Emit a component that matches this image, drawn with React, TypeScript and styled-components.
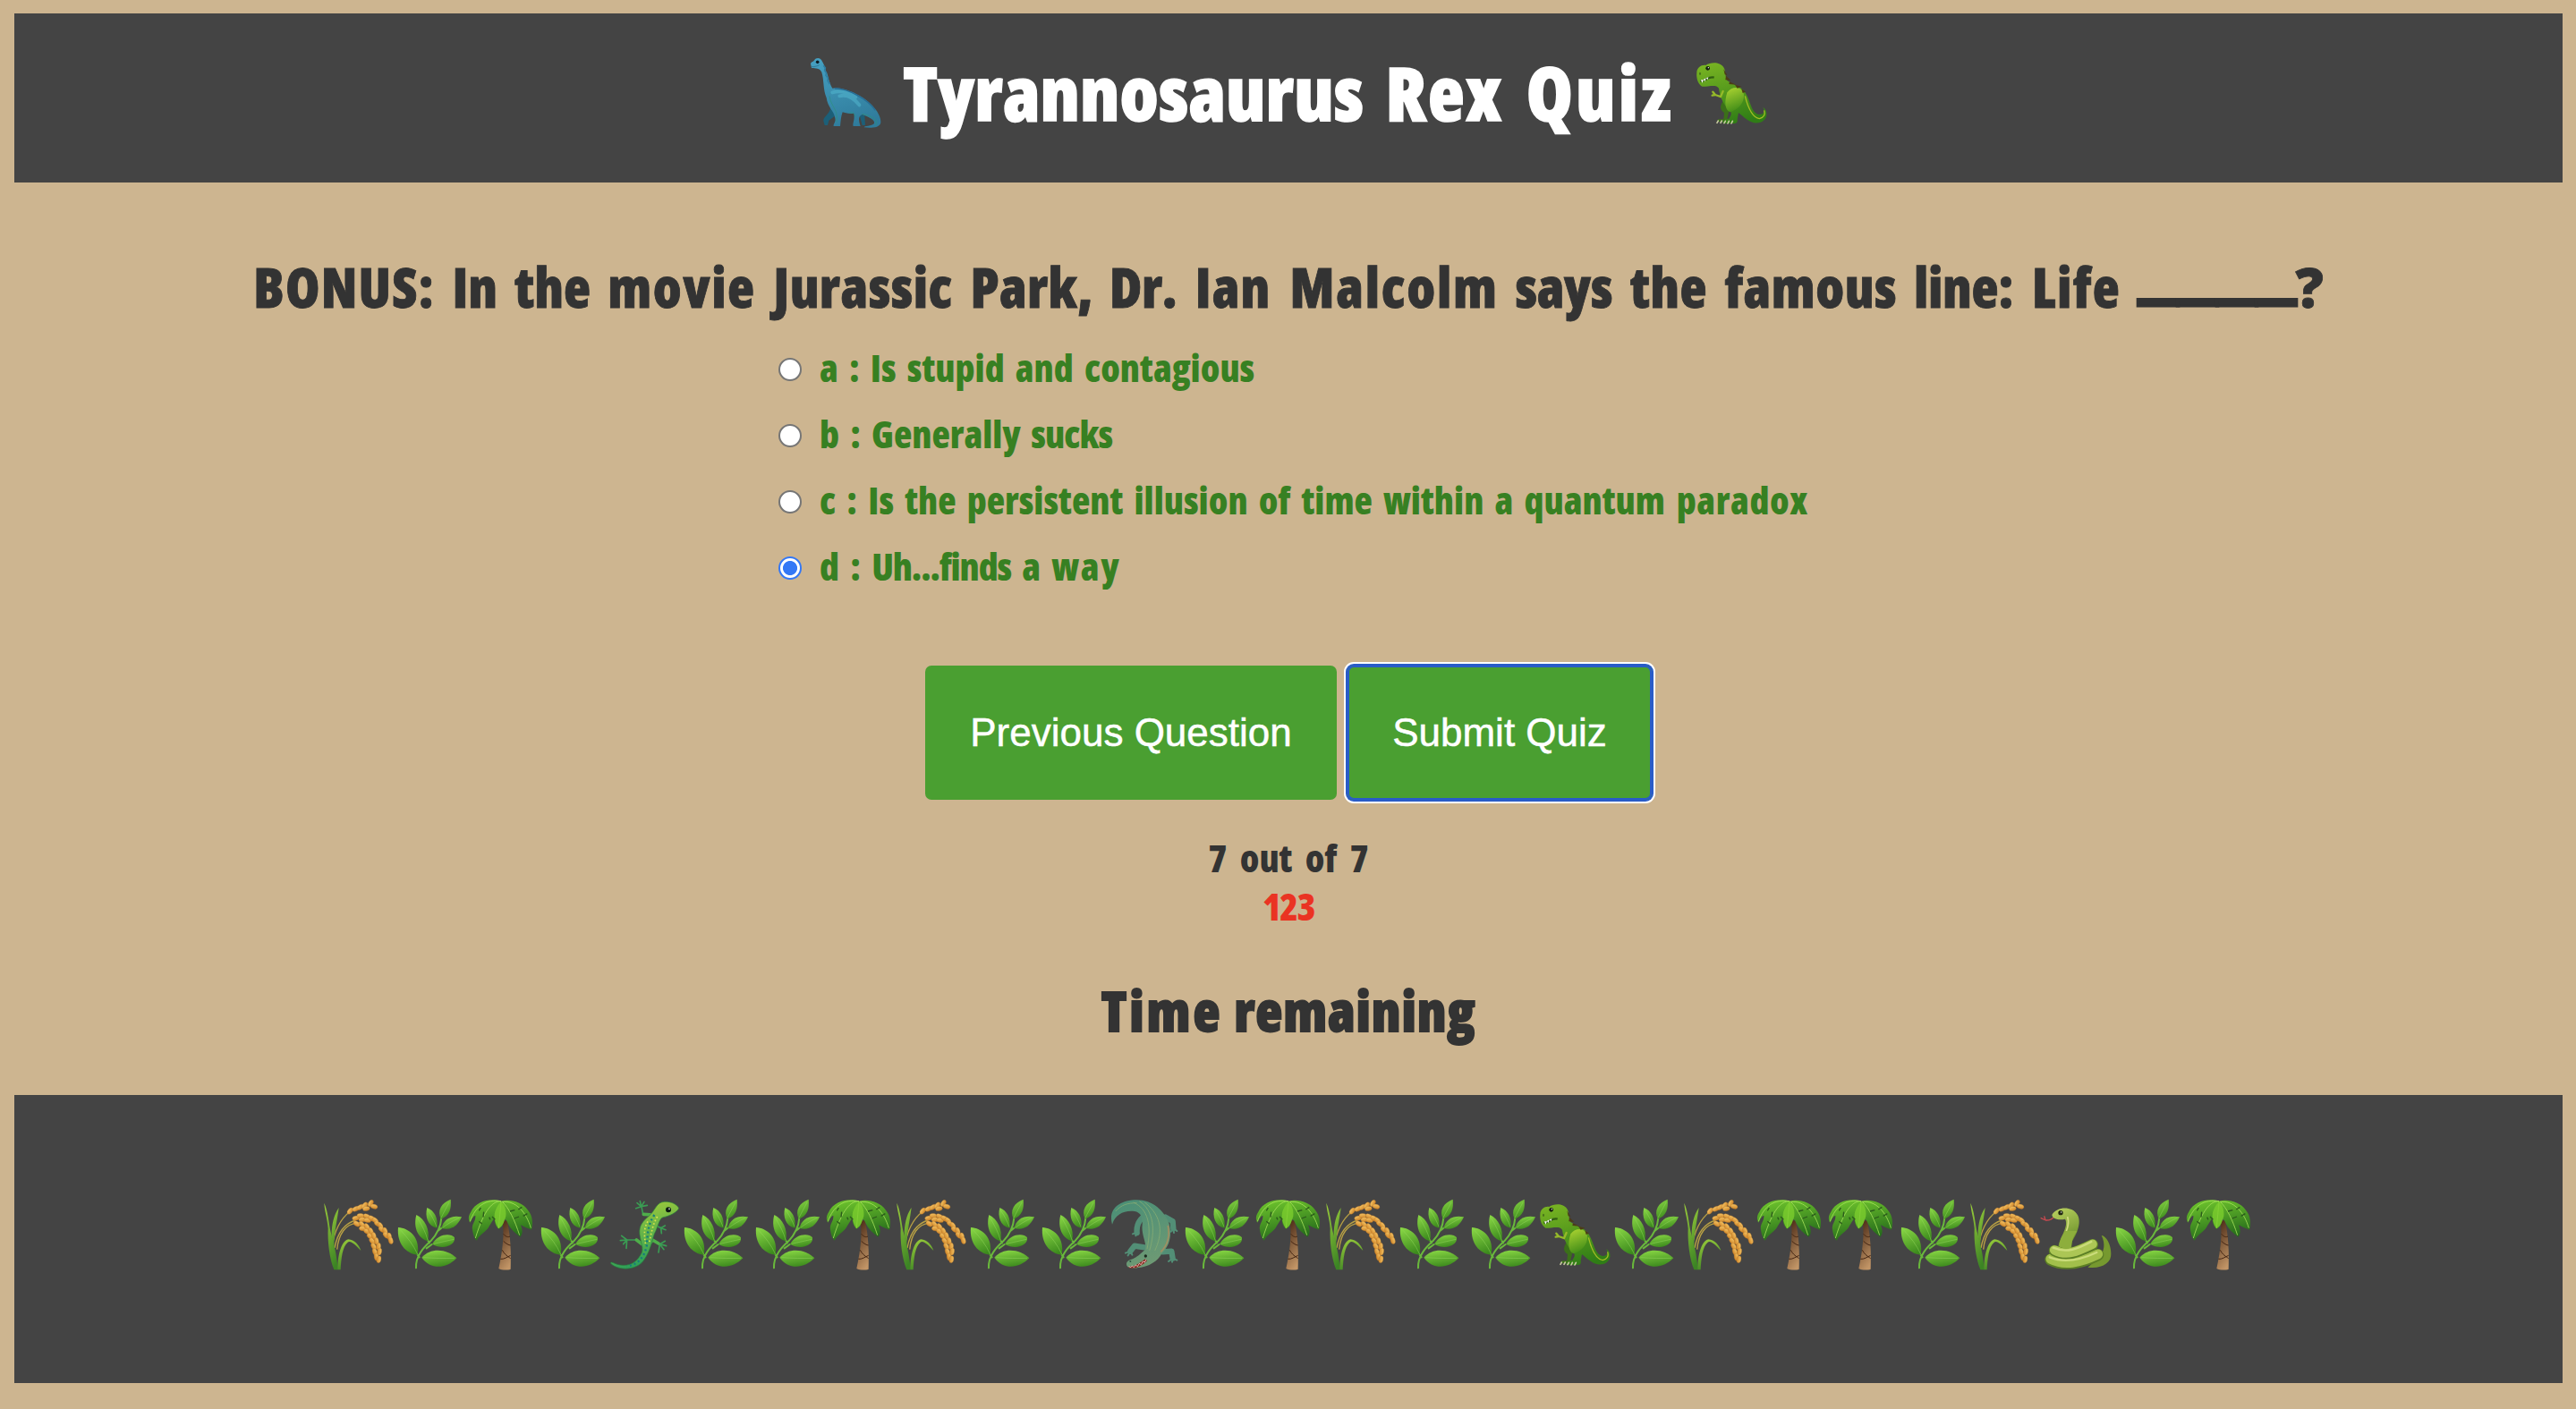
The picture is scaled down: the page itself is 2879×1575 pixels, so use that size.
import React, { useState } from "react";
import styled, { createGlobalStyle } from "styled-components";

const GlobalStyle = createGlobalStyle`
  body { margin: 0; background: #cdb590; }
  * { box-sizing: border-box; }
`;

const Page = styled.div`
  min-height: 1575px;
  padding: 15px 15px 29px 16px;
  display: flex;
  flex-direction: column;
  background: #cdb590;
  color: #333;
  font-family: "Open Sans", "Noto Sans", sans-serif;
  font-weight: 800;
`;

const Header = styled.header`
  height: 189px;
  padding-top: 31px;
  display: flex;
  justify-content: center;
  align-items: flex-start;
  gap: 24px;
  background: #444;
`;

const Line = styled.span<{ $gap?: number }>`
  font-stretch: 75%;
  word-spacing: ${(p) => p.$gap ?? 0}px;
  white-space: nowrap;
`;

const Word = styled.span<{ $ls: number }>`
  letter-spacing: ${(p) => p.$ls}px;
`;

const Title = styled.h1`
  margin: 0;
  font-size: 84px;
  line-height: 114px;
  font-weight: 800;
  color: #fff;
  -webkit-text-stroke: 1.5px #fff;
`;

const HeaderIcon = styled.div`
  height: 80px;
  margin-top: 18px;
`;

const Glyph = styled.svg`
  display: block;
  flex: none;
  width: 80px;
  height: 80px;
  overflow: visible;
`;

const Quiz = styled.main`
  display: flex;
  flex-direction: column;
  align-items: center;
`;

const Heading = styled.h2<{ $top: number; $stroke: number }>`
  margin: ${(p) => p.$top}px 0 0;
  font-size: 62px;
  line-height: 80px;
  font-weight: 800;
  -webkit-text-stroke: ${(p) => p.$stroke}px #333;
`;

const Blank = styled.span`
  display: inline-block;
  margin-right: 52px;
  transform: translateY(-13px) scaleX(1.42);
  transform-origin: left center;
  -webkit-text-stroke: 3px #333;
`;

const QuestionMark = styled.span`
  font-stretch: 100%;
`;

const Options = styled.div`
  width: 1140px;
  margin-top: 13px;
`;

const Option = styled.label`
  height: 74px;
  display: flex;
  align-items: center;
  gap: 20px;
  color: #378022;
  font-size: 42px;
  line-height: 74px;
`;

const OptionText = styled.span`
  padding-top: 2px;
`;

const Radio = styled.input`
  appearance: none;
  flex: none;
  width: 26px;
  height: 26px;
  margin: 6px 0 0;
  border: 2px solid #767676;
  border-radius: 50%;
  background: #fff;
  &:checked {
    border-color: #3478f6;
    background: radial-gradient(circle, #3478f6 0 7.6px, #fff 8.4px);
  }
`;

const Actions = styled.div`
  margin-top: 75px;
  display: flex;
  gap: 12px;
`;

const Button = styled.button<{ $width: number; $focused?: boolean }>`
  width: ${(p) => p.$width}px;
  height: 150px;
  padding: 0;
  border: 0;
  border-radius: 7px;
  background: #4a9f31;
  color: #fff;
  font: 44px/150px "Liberation Sans", Arial, sans-serif;
  -webkit-text-stroke: 0.5px #fff;
  white-space: nowrap;
  box-shadow: ${(p) => (p.$focused ? "inset 0 0 0 2px #295cc8, 0 0 0 2px #295cc8, 0 0 0 4px #fff" : "none")};
`;

const Status = styled.div<{ $top?: number; $color?: string }>`
  margin-top: ${(p) => p.$top ?? 0}px;
  color: ${(p) => p.$color ?? "#333"};
  font-size: 42px;
  line-height: 54px;
`;

const Footer = styled.footer`
  height: 322px;
  margin-top: 55px;
  padding-top: 116px;
  display: flex;
  justify-content: center;
  background: #444;
`;

const GradientStore = styled.svg`
  position: absolute;
  width: 0;
  height: 0;
`;

function Gradients() {
  const defs: [string, string, string][] = [
    ["leaf", "#86d443", "#3c8a1d"],
    ["frond", "#6cc22c", "#21661a"],
    ["bark", "#4a2a16", "#c29566"],
    ["blade", "#95c83a", "#3c8424"],
    ["grain", "#f6c565", "#cf862a"],
    ["rex", "#76b222", "#2f7d16"],
    ["thigh", "#a6d030", "#3d8a17"],
    ["sauro", "#459fc0", "#2f7b9b"],
    ["croc", "#4b8f76", "#6f9a74"],
    ["snake", "#b5cd5c", "#5b8420"],
    ["gecko", "#a6cc38", "#219a5c"],
  ];
  return (
    <GradientStore>
      <defs>
        {defs.map(([id, a, b]) => (
          <linearGradient key={id} id={id} x1="0.3" y1="0" x2="0.6" y2="1">
            <stop offset="0" stopColor={a} />
            <stop offset="1" stopColor={b} />
          </linearGradient>
        ))}
      </defs>
    </GradientStore>
  );
}

const grains: [number, number, number][] = [
  [94, 41, -50], [113, 34, -25], [128, 28, -30], [143, 22, -50], [148, 33, -10], [163, 15, -60], [174, 26, 15],
  [113, 65, -10], [129, 57, 5], [135, 70, 0], [150, 59, 25], [152, 72, 10], [166, 66, 30], [178, 73, 45], [186, 84, 35], [195, 90, 60], [200, 103, 40], [211, 108, 70], [214, 122, 50], [225, 126, 80], [230, 140, 75],
  [116, 84, 30], [133, 86, 50], [136, 100, 10], [150, 94, 60], [151, 110, 30], [163, 108, 65], [161, 126, 40], [173, 124, 75], [168, 142, 50], [182, 142, 80], [173, 160, 60], [189, 160, 95], [177, 178, 70], [192, 177, 100], [182, 195, 80], [190, 203, 100],
];

function Rice() {
  return (
    <Glyph viewBox="0 0 240 240">
      <path d="M34 160C40 110 62 66 92 44M42 165C50 120 70 85 112 72M50 170C55 120 78 84 116 82" fill="none" stroke="#b8a044" strokeWidth="4" />
      <path d="M56 30C40 52 32 86 32 122L40 180C38 120 50 80 56 30Z" fill="url(#blade)" />
      <path d="M7 14C20 44 22 78 28 108C38 142 50 190 53 238H40C24 200 18 140 20 100C18 66 8 42 7 14Z" fill="url(#blade)" />
      <path d="M52 238C52 196 62 142 88 136C108 138 124 154 130 174C110 152 94 138 86 146C68 160 64 200 62 238Z" fill="url(#blade)" />
      {grains.map(([x, y, r]) => (
        <ellipse key={`${x}-${y}`} cx={x} cy={y} rx="12" ry="7.5" transform={`rotate(${r} ${x} ${y})`} fill="url(#grain)" stroke="#b97322" strokeWidth="1" />
      ))}
    </Glyph>
  );
}

function Herb() {
  return (
    <Glyph viewBox="0 0 240 240">
      <path d="M75 232C73 190 102 162 124 142C148 116 158 94 160 64M80 188L86 196M115 140L120 148M128 153L110 166M160 98L148 108" fill="none" stroke="#69b83c" strokeWidth="6" strokeLinecap="round" />
      <g fill="url(#leaf)">
        <path d="M15 96C50 98 90 128 80 188C40 184 10 150 15 96Z" />
        <path d="M76 54C104 68 122 100 115 142C84 134 64 100 76 54Z" />
        <path d="M112 30C136 40 150 64 145 98C114 92 104 60 112 30Z" />
        <path d="M191 2C160 14 145 38 158 68C188 56 194 34 191 2Z" />
        <path d="M228 61C196 54 168 66 160 99C190 106 212 96 228 61Z" />
        <path d="M129 152C148 116 192 114 204 130C208 156 166 174 129 152Z" />
        <path d="M94 197C124 162 180 168 211 199C178 234 124 240 94 197Z" />
      </g>
      <path d="M24 106C46 130 66 154 80 186M80 64C96 92 108 114 114 138M115 38C128 58 138 76 144 94M186 12C176 32 166 48 159 64M220 64C198 74 178 86 164 97M134 151C158 146 182 140 202 136M100 197C138 200 172 200 204 199" fill="none" stroke="#96d860" strokeWidth="2" opacity=".7" />
    </Glyph>
  );
}

function Palm() {
  return (
    <Glyph viewBox="0 0 240 240">
      <path d="M124 72C132 110 126 172 112 234C122 240 142 240 152 236C154 180 152 120 140 74Z" fill="url(#bark)" />
      <path d="M128 118C136 128 144 130 150 126M128 142C136 150 146 156 152 156M124 172C132 188 144 194 152 200M118 202C130 204 142 194 152 190" fill="none" stroke="#442512" strokeWidth="3" />
      <path d="M120 8C86 -2 36 6 18 46C10 58 10 70 16 80C22 70 24 60 34 56C36 76 20 84 24 104C26 118 30 132 38 140C48 120 68 112 78 96C84 86 92 74 98 64C98 84 104 94 112 101C122 96 130 84 130 68L138 72C148 96 158 108 184 128C194 118 192 104 186 88C200 96 212 100 222 104C228 84 226 56 210 38C190 8 146 0 120 8Z" fill="url(#frond)" />
      <path d="M120 8C92 8 64 34 34 132M120 8C70 0 34 24 16 76M120 8C118 36 114 70 112 98M124 10C146 30 166 72 182 122M124 10C170 6 204 44 220 98" fill="none" stroke="#a6e05a" strokeWidth="2.5" />
      <path d="M120 10C104 26 96 46 98 64C102 84 106 94 112 100C126 92 132 74 136 58C138 36 130 18 120 10Z" fill="#7ccd2e" opacity=".8" />
      <path d="M62 44L60 62M80 62L84 70M46 76L56 84M150 42L166 38M164 66L180 60M178 36L190 28M194 58L208 50M52 30L46 40M100 70L90 60" stroke="#2b5a1c" strokeWidth="4" />
    </Glyph>
  );
}

function Lizard() {
  return (
    <Glyph viewBox="0 0 240 240">
      <g fill="none" strokeLinecap="round" strokeLinejoin="round">
        <path d="M150 54L116 52L110 22M96 14L110 26L106 8M110 26L120 10M110 26L130 22M110 26L92 32M160 68L164 92L176 98M176 98L190 90M176 98L192 104M176 98L178 116M118 160L94 138L62 138M62 138L44 124M62 138L40 140M62 138L50 152M62 138L60 166M132 160L146 138L172 152M172 152L190 142M172 152L194 158M172 152L186 170M172 152L168 180" stroke="#3a9c53" strokeWidth="5" />
        <path d="M118 156L94 138M132 158L148 138L168 150M118 52L150 54" stroke="#4fae4a" strokeWidth="11" />
      </g>
      <path d="M142 52C160 32 162 12 188 10C210 8 232 20 236 32C230 46 204 58 184 62C170 64 166 96 154 118C146 140 142 172 120 204C98 240 34 244 7 216C8 210 14 214 24 218C70 234 98 210 112 180C120 160 98 126 106 96C114 74 128 66 142 52Z" fill="url(#gecko)" stroke="#257b3b" strokeWidth="2" />
      <path d="M154 54C130 90 132 120 128 160C120 194 100 222 62 226" fill="none" stroke="#167d7c" strokeWidth="7" strokeDasharray="6 9" />
      <path d="M164 60C146 90 144 120 136 148M132 76C118 100 120 120 124 150" fill="none" stroke="#dbe34d" strokeWidth="5" strokeDasharray="5 7" />
      <circle cx="201" cy="37" r="9" fill="#0c1a12" />
      <circle cx="204" cy="34" r="2.5" fill="#fff" />
    </Glyph>
  );
}

function Crocodile() {
  return (
    <Glyph viewBox="0 0 240 240">
      <g fill="none" stroke="#528e76" strokeLinecap="round" strokeLinejoin="round">
        <path d="M112 62C96 76 90 92 92 114M188 62L212 76L214 100M122 164L84 158L70 176M178 178L208 176L212 200" strokeWidth="19" />
        <path d="M92 112L78 118M92 112L88 124M214 98L206 110M214 98L216 114M214 98L226 108M70 176L54 182M70 176L62 190M70 176L76 188M212 200L198 210M212 200L210 212M212 200L226 206" strokeWidth="6" />
      </g>
      <path d="M9 86C-6 32 36 4 92 4C144 4 184 40 200 84C210 120 202 158 176 182C162 212 122 236 66 232C50 222 56 206 78 202C98 192 108 180 120 170C126 150 106 120 110 88C112 62 104 44 84 42C48 38 20 52 9 86Z" fill="url(#croc)" />
      <path d="M100 8C150 40 154 110 134 174M80 12C130 34 142 90 126 168M118 12C180 60 178 120 152 174M20 42C40 20 60 14 92 14" fill="none" stroke="#84ab74" strokeWidth="2.5" />
      <path d="M196 90C204 130 190 160 172 178" fill="none" stroke="#a28e62" strokeWidth="5" />
      <path d="M64 228C88 226 104 214 120 202L126 208C110 224 90 236 66 232Z" fill="#8e2018" />
      <path d="M66 226L70 231L76 225L82 230L88 222L94 227L100 217L106 221L112 210L118 213L122 204" fill="none" stroke="#fff" strokeWidth="2" />
      <circle cx="121" cy="192" r="5" fill="#1c2b20" />
      <circle cx="70" cy="210" r="3" fill="#2c5143" />
    </Glyph>
  );
}

function TRex() {
  return (
    <Glyph viewBox="0 0 240 240">
      <path d="M98 140C82 158 78 174 96 186L94 208H76L72 216H104L112 180Z" fill="#3b7019" />
      <path d="M4 52C4 34 22 24 34 27C50 16 82 14 94 34C102 46 98 62 106 78C124 92 152 96 166 118C186 150 186 186 212 192C230 192 234 182 226 168C246 180 242 214 212 220C182 224 162 200 144 186L140 208C142 216 138 222 132 222H92C90 212 100 208 112 206C118 196 124 190 114 176C98 164 82 138 78 104C70 90 48 98 22 98C8 90 2 70 4 52Z" fill="url(#rex)" />
      <path d="M106 118C124 94 158 98 162 126C164 156 138 178 116 184C98 178 96 150 106 118Z" fill="url(#thigh)" />
      <path d="M166 130C176 170 190 202 214 206C230 202 234 192 230 178" fill="none" stroke="#a3be25" strokeWidth="4" />
      <path d="M94 40L106 60L98 58ZM102 62L118 78L100 76ZM114 82L136 92L112 90ZM132 92L154 98L140 104ZM154 106L168 116L158 120Z" fill="#4c3c16" />
      <path d="M92 114L84 132L66 126M66 126L58 116M66 126L56 128" fill="none" stroke="#95ba29" strokeWidth="7" strokeLinecap="round" />
      <path d="M16 80C30 82 44 62 62 68" fill="none" stroke="#315e12" strokeWidth="7" />
      <path d="M18 76L22 86L27 76ZM27 74L31 82L35 70ZM36 70L40 76L43 67Z" fill="#fff" />
      <circle cx="41" cy="37" r="7" fill="#15200c" />
      <circle cx="43" cy="35" r="2" fill="#fff" />
      <ellipse cx="15" cy="55" rx="3" ry="5" fill="#46711a" />
      <path d="M72 220L76 213M84 220L88 213M96 221L100 214M108 222L112 214M120 222L124 214" fill="none" stroke="#c6c8a0" strokeWidth="5" strokeLinecap="round" />
    </Glyph>
  );
}

function Sauropod() {
  return (
    <Glyph viewBox="0 0 240 240">
      <path d="M70 168C66 194 44 198 46 214L50 228H60L64 212L88 194ZM164 186L172 212L176 228H186L184 196Z" fill="#1c5f78" />
      <path d="M3 22C5 14 14 16 18 6C28 -1 38 4 42 14C50 26 50 36 54 46C64 64 62 82 76 104C96 98 132 110 166 128C206 150 240 190 238 218C236 238 200 238 182 235C182 229 208 232 216 222C220 210 196 200 176 192C164 196 162 208 170 231H146C142 222 152 212 148 188C132 192 118 186 110 184C104 200 104 214 102 231H80C78 222 90 218 84 200C82 182 60 168 56 136C44 108 48 74 40 50C34 36 20 38 6 36Z" fill="url(#sauro)" />
      <path d="M76 118C100 110 130 116 154 134M100 130C126 124 150 140 166 160" fill="none" stroke="#54bad2" strokeWidth="12" opacity=".5" strokeLinecap="round" />
      <path d="M84 105C130 104 196 142 220 178" fill="none" stroke="#276d95" strokeWidth="4" />
      <path d="M66 130C72 170 96 170 90 218M132 186C150 186 146 184 154 200M176 190C210 198 232 210 220 228" fill="none" stroke="#2c917f" strokeWidth="3" opacity=".7" />
      <path d="M46 28L52 36L50 44L56 54L54 60L61 70L60 78L67 90" fill="none" stroke="#2f7fa3" strokeWidth="5" />
      <circle cx="26" cy="16" r="5.5" fill="#0d1c24" />
      <path d="M6 32C18 32 24 30 32 26" fill="none" stroke="#266782" strokeWidth="2" />
    </Glyph>
  );
}

function Snake() {
  return (
    <Glyph viewBox="0 0 240 240">
      <path d="M46 62C36 74 26 72 18 72M18 72L2 64M18 72L14 58" fill="none" stroke="#c94a50" strokeWidth="4" />
      <path d="M40 54C52 32 84 26 106 36C146 56 132 104 108 142L104 176L60 168C64 132 98 92 84 68C66 72 42 70 40 54Z" fill="url(#snake)" />
      <path d="M92 60C104 94 76 126 68 160" fill="none" stroke="#d3dc80" strokeWidth="5" />
      <path d="M160 230C206 236 240 216 238 184C238 154 222 124 206 123C220 152 216 178 196 198Z" fill="#76992f" />
      <g fill="none" strokeLinecap="round" strokeLinejoin="round">
        <path d="M36 204C80 226 130 220 194 188" stroke="#5c7f25" strokeWidth="40" />
        <path d="M36 202C80 224 130 216 194 186" stroke="#a2bf4b" strokeWidth="33" />
        <path d="M48 174C90 196 126 178 176 154" stroke="#5c7f25" strokeWidth="38" />
        <path d="M48 172C90 194 126 176 176 152" stroke="#acc655" strokeWidth="31" />
        <path d="M44 164C90 184 126 168 172 144M32 196C80 216 130 208 190 180" stroke="#cbdc7b" strokeWidth="7" />
      </g>
      <path d="M64 158C64 140 74 124 84 108L124 108C112 124 106 142 104 164C90 170 76 168 64 158Z" fill="#8dae3c" />
      <circle cx="69" cy="47" r="8" fill="#20280f" />
      <circle cx="71" cy="45" r="2" fill="#fff" />
    </Glyph>
  );
}

const icons = { rice: Rice, herb: Herb, palm: Palm, lizard: Lizard, croc: Crocodile, rex: TRex, snake: Snake };
type IconName = keyof typeof icons;

const scenery = (
  "rice herb palm herb lizard herb herb palm rice herb herb croc herb palm " +
  "rice herb herb rex herb rice palm palm herb rice snake herb palm"
).split(" ") as IconName[];

/* A run of text and its tracking in px. */
type Run = [string, number?];

function Phrase({ runs, gap, children }: { runs: Run[]; gap?: number; children?: React.ReactNode }) {
  return (
    <Line $gap={gap}>
      {runs.map(([text, ls = 0], i) => (
        <Word key={i} $ls={ls}>{text}</Word>
      ))}
      {children}
    </Line>
  );
}

const question: Run[] = [
  ["BONUS:", 1.2], [" In the "], ["movie", 1.5], [" Jurassic", 0.45], [" Park,", 0.3], [" Dr.", -0.5], [" Ian", 1.2],
  [" Malcolm", 1.7], [" says", -0.4], [" the famous", 0.5], [" line:", -0.3], [" Life", 1.5],
];

const options: Run[][] = [
  [["a : Is stupid and contagious"]],
  [["b : Generally"], [" sucks", -0.9]],
  [["c : Is the persistent illusion of time within a quantum"], [" paradox", 0.6]],
  [["d : "], ["Uh...finds", -1.1], [" a "], ["way", 1.6]],
];

export default function App() {
  const [selected, setSelected] = useState(3);
  return (
    <Page>
      <GlobalStyle />
      <Gradients />
      <Header>
        <HeaderIcon><Sauropod /></HeaderIcon>
        <Title><Phrase gap={8} runs={[["Tyrannosaurus", 0.1], [" Rex", 1.7], [" Quiz", 3.2]]} /></Title>
        <HeaderIcon><TRex /></HeaderIcon>
      </Header>
      <Quiz>
        <Heading $top={76} $stroke={0.8}>
          <Phrase gap={8.4} runs={question}>
            {" "}
            <Blank>____</Blank>
            <QuestionMark>?</QuestionMark>
          </Phrase>
        </Heading>
        <Options>
          {options.map((runs, i) => (
            <Option key={i}>
              <Radio type="radio" name="answer" checked={selected === i} onChange={() => setSelected(i)} />
              <OptionText><Phrase gap={4.8} runs={runs} /></OptionText>
            </Option>
          ))}
        </Options>
        <Actions>
          <Button $width={460}>Previous Question</Button>
          <Button $width={340} $focused>Submit Quiz</Button>
        </Actions>
        <Status $top={38}><Phrase gap={7} runs={[["7 out of 7"]]} /></Status>
        <Status $color="#ea3323"><Phrase runs={[["123", -1.5]]} /></Status>
        <Heading $top={49} $stroke={1.8}><Phrase gap={1} runs={[["Time", 3], [" remaining", 0.9]]} /></Heading>
      </Quiz>
      <Footer>
        {scenery.map((name, i) => {
          const Icon = icons[name];
          return <Icon key={i} />;
        })}
      </Footer>
    </Page>
  );
}
